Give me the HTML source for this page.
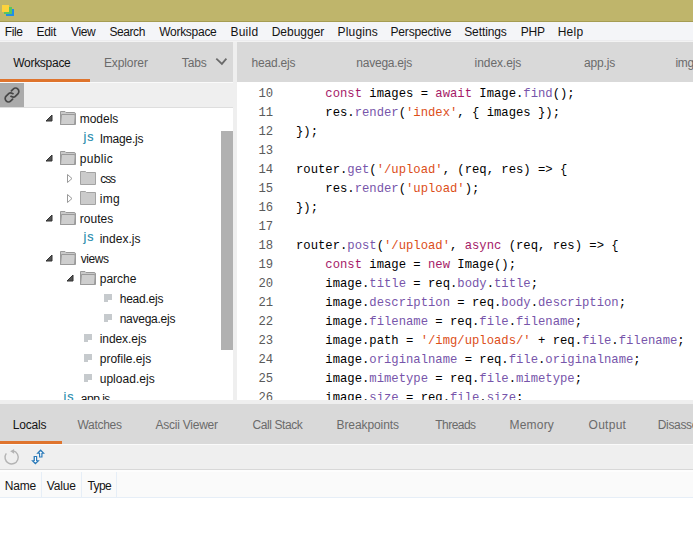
<!DOCTYPE html>
<html><head><meta charset="utf-8"><style>
html,body{margin:0;padding:0}
body{width:693px;height:538px;position:relative;overflow:hidden;background:#fff;font-family:"Liberation Sans",sans-serif}
.r{position:absolute}
.t{position:absolute;font-family:"Liberation Sans",sans-serif;font-size:12px;line-height:20px;white-space:pre}
.c{position:absolute;font-family:"Liberation Mono",monospace;font-size:12.22px;line-height:20px;white-space:pre;color:#000}
</style></head><body>
<div class="r" style="left:0;top:0;width:693px;height:21px;background:#bfb56b"></div>
<div class="r" style="left:0;top:21px;width:693px;height:1px;background:#a59c52"></div>
<svg class="r" style="left:0;top:0" width="20" height="20">
<rect x="6" y="9" width="8" height="7" fill="#1e8ee6"/>
<rect x="4" y="7" width="8" height="7" fill="#5cc65c"/>
<rect x="2" y="5" width="7" height="7" fill="#fdd33c"/>
</svg>
<div class="r" style="left:0;top:22px;width:693px;height:20px;background:#f4f5f8"></div>
<div class="r" style="left:0;top:40px;width:693px;height:1px;background:#ececee"></div>
<div class="r" style="left:0;top:41px;width:693px;height:1px;background:#f3f3f3"></div>
<!-- left tab bar -->
<div class="r" style="left:0;top:42px;width:233px;height:40px;background:#d9d9d9"></div>
<div class="r" style="left:0;top:79px;width:90px;height:3px;background:#df742d"></div>
<div class="r" style="left:0;top:82px;width:233px;height:1px;background:#fafafa"></div>
<div class="r" style="left:0;top:83px;width:233px;height:24px;background:#efefef"></div>
<div class="r" style="left:0;top:83px;width:24px;height:24px;background:#ababab"></div>
<svg class="r" style="left:0;top:83px" width="24" height="24">
<g transform="translate(12 12) rotate(-45)" fill="none" stroke="#474747" stroke-width="1.7" stroke-linecap="round">
<path d="M2.4 -3.3 H5 A3.3 3.3 0 0 1 5 3.3 H1 Q-0.8 3.3 -1.7 0.2"/>
<path d="M-2.4 3.3 H-5 A3.3 3.3 0 0 1 -5 -3.3 H-1 Q0.8 -3.3 1.7 -0.2"/>
</g>
</svg>
<div class="r" style="left:0;top:107px;width:233px;height:1px;background:#dedede"></div>
<div class="r" style="left:0;top:108px;width:233px;height:292px;background:#fff;overflow:hidden" id="tree">
</div>
<div class="r" style="left:221px;top:131px;width:12px;height:219px;background:#b1b1b1"></div>
<!-- sash -->
<div class="r" style="left:233px;top:42px;width:4px;height:362px;background:#efefef"></div>
<!-- editor tabs -->
<div class="r" style="left:237px;top:42px;width:456px;height:40px;background:#d9d9d9"></div>
<div class="r" style="left:237px;top:82px;width:456px;height:318px;background:#fff;overflow:hidden">
<div class="c" style="top:2px;left:21.5px;color:#5a5a5a">10</div><div class="c" style="top:2px;left:59px">    <span style="color:#a51a68">const</span> images = <span style="color:#a51a68">await</span> Image.<span style="color:#7755aa">find</span>();</div>
<div class="c" style="top:21px;left:21.5px;color:#5a5a5a">11</div><div class="c" style="top:21px;left:59px">    res.<span style="color:#7755aa">render</span>(<span style="color:#dc4e18">'index'</span>, { images });</div>
<div class="c" style="top:40px;left:21.5px;color:#5a5a5a">12</div><div class="c" style="top:40px;left:59px">});</div>
<div class="c" style="top:59px;left:21.5px;color:#5a5a5a">13</div><div class="c" style="top:59px;left:59px"></div>
<div class="c" style="top:78px;left:21.5px;color:#5a5a5a">14</div><div class="c" style="top:78px;left:59px">router.<span style="color:#7755aa">get</span>(<span style="color:#dc4e18">'/upload'</span>, (req, res) =&gt; {</div>
<div class="c" style="top:97px;left:21.5px;color:#5a5a5a">15</div><div class="c" style="top:97px;left:59px">    res.<span style="color:#7755aa">render</span>(<span style="color:#dc4e18">'upload'</span>);</div>
<div class="c" style="top:116px;left:21.5px;color:#5a5a5a">16</div><div class="c" style="top:116px;left:59px">});</div>
<div class="c" style="top:135px;left:21.5px;color:#5a5a5a">17</div><div class="c" style="top:135px;left:59px"></div>
<div class="c" style="top:154px;left:21.5px;color:#5a5a5a">18</div><div class="c" style="top:154px;left:59px">router.<span style="color:#7755aa">post</span>(<span style="color:#dc4e18">'/upload'</span>, <span style="color:#a51a68">async</span> (req, res) =&gt; {</div>
<div class="c" style="top:173px;left:21.5px;color:#5a5a5a">19</div><div class="c" style="top:173px;left:59px">    <span style="color:#a51a68">const</span> image = <span style="color:#a51a68">new</span> Image();</div>
<div class="c" style="top:192px;left:21.5px;color:#5a5a5a">20</div><div class="c" style="top:192px;left:59px">    image.<span style="color:#7755aa">title</span> = req.<span style="color:#7755aa">body</span>.<span style="color:#7755aa">title</span>;</div>
<div class="c" style="top:211px;left:21.5px;color:#5a5a5a">21</div><div class="c" style="top:211px;left:59px">    image.<span style="color:#7755aa">description</span> = req.<span style="color:#7755aa">body</span>.<span style="color:#7755aa">description</span>;</div>
<div class="c" style="top:230px;left:21.5px;color:#5a5a5a">22</div><div class="c" style="top:230px;left:59px">    image.<span style="color:#7755aa">filename</span> = req.<span style="color:#7755aa">file</span>.<span style="color:#7755aa">filename</span>;</div>
<div class="c" style="top:249px;left:21.5px;color:#5a5a5a">23</div><div class="c" style="top:249px;left:59px">    image.path = <span style="color:#dc4e18">'/img/uploads/'</span> + req.<span style="color:#7755aa">file</span>.<span style="color:#7755aa">filename</span>;</div>
<div class="c" style="top:268px;left:21.5px;color:#5a5a5a">24</div><div class="c" style="top:268px;left:59px">    image.<span style="color:#7755aa">originalname</span> = req.<span style="color:#7755aa">file</span>.<span style="color:#7755aa">originalname</span>;</div>
<div class="c" style="top:287px;left:21.5px;color:#5a5a5a">25</div><div class="c" style="top:287px;left:59px">    image.<span style="color:#7755aa">mimetype</span> = req.<span style="color:#7755aa">file</span>.<span style="color:#7755aa">mimetype</span>;</div>
<div class="c" style="top:306px;left:21.5px;color:#5a5a5a">26</div><div class="c" style="top:306px;left:59px">    image.<span style="color:#7755aa">size</span> = req.<span style="color:#7755aa">file</span>.<span style="color:#7755aa">size</span>;</div>

</div>
<div class="r" style="left:0;top:400px;width:693px;height:4px;background:#efefef"></div>
<!-- bottom -->
<div class="r" style="left:0;top:404px;width:693px;height:40px;background:#d9d9d9"></div>
<div class="r" style="left:0;top:441px;width:62px;height:3px;background:#df742d"></div>
<div class="r" style="left:0;top:444px;width:693px;height:1px;background:#fafafa"></div>
<div class="r" style="left:0;top:445px;width:693px;height:24px;background:#efefef"></div>
<div class="r" style="left:0;top:469px;width:693px;height:1px;background:#d8d8d8"></div>
<div class="r" style="left:0;top:470px;width:693px;height:2px;background:#fdfdfd"></div>
<div class="r" style="left:0;top:472px;width:693px;height:25px;background:#fafafa"></div>
<div class="r" style="left:0;top:497px;width:693px;height:1px;background:#e6eef7"></div>
<div class="r" style="left:41px;top:472px;width:1px;height:25px;background:#e6eef7"></div>
<div class="r" style="left:81px;top:472px;width:1px;height:25px;background:#e6eef7"></div>
<div class="r" style="left:116px;top:472px;width:1px;height:25px;background:#e6eef7"></div>
<svg class="r" style="left:0;top:445px" width="50" height="24">
<path d="M13.2 5.9 A6.6 6.6 0 1 1 6.3 8.4" fill="none" stroke="#b3b3b3" stroke-width="1.4"/>
<path d="M10.2 6.3 L14.1 4.0 L14.1 8.7 Z" fill="#b3b3b3"/>
<path d="M40.6 4.3 L45 8.8 L42.5 8.8 L42.5 12.6 L39 12.6 L39 8.8 L36.3 8.8 Z" fill="#2a7ab9"/>
<path d="M40.7 6.3 L42.3 8 L41.3 8 L41.3 11.6 L40.2 11.6 L40.2 8 L39.1 8 Z" fill="#fff"/>
<path d="M35.4 19.5 L39.8 15.3 L37.2 15.3 L37.2 11 L33.6 11 L33.6 15.3 L31.1 15.3 Z" fill="#2a7ab9"/>
<path d="M35.4 17.6 L37.1 16.1 L36 16.1 L36 12 L34.9 12 L34.9 16.1 L33.8 16.1 Z" fill="#fff"/>
</svg>
<svg class="r" style="left:210px;top:52px" width="22" height="20">
<path d="M6.3 6.7 L11.9 11.9 L16.4 6.7" fill="none" stroke="#6a6a6a" stroke-width="1.8"/>
</svg>
<span class="t" style="left:4.80px;top:22.00px;color:#141414;font-size:12px;letter-spacing:-0.400px">File</span>
<span class="t" style="left:36.40px;top:22.00px;color:#141414;font-size:12px;letter-spacing:-0.267px">Edit</span>
<span class="t" style="left:71.10px;top:22.00px;color:#141414;font-size:12px;letter-spacing:-0.433px">View</span>
<span class="t" style="left:109.40px;top:22.00px;color:#141414;font-size:12px;letter-spacing:-0.420px">Search</span>
<span class="t" style="left:159.20px;top:22.00px;color:#141414;font-size:12px;letter-spacing:-0.275px">Workspace</span>
<span class="t" style="left:230.40px;top:22.00px;color:#141414;font-size:12px;letter-spacing:0.250px">Build</span>
<span class="t" style="left:271.70px;top:22.00px;color:#141414;font-size:12px;letter-spacing:-0.014px">Debugger</span>
<span class="t" style="left:337.60px;top:22.00px;color:#141414;font-size:12px;letter-spacing:0.150px">Plugins</span>
<span class="t" style="left:390.50px;top:22.00px;color:#141414;font-size:12px;letter-spacing:-0.170px">Perspective</span>
<span class="t" style="left:464.20px;top:22.00px;color:#141414;font-size:12px;letter-spacing:-0.100px">Settings</span>
<span class="t" style="left:520.70px;top:22.00px;color:#141414;font-size:12px;letter-spacing:-0.200px">PHP</span>
<span class="t" style="left:557.70px;top:22.00px;color:#141414;font-size:12px;letter-spacing:0.233px">Help</span>
<span class="t" style="left:13.20px;top:53.00px;color:#141414;font-size:12px;letter-spacing:-0.275px">Workspace</span>
<span class="t" style="left:103.90px;top:53.00px;color:#6b6b6b;font-size:12px;letter-spacing:-0.100px">Explorer</span>
<span class="t" style="left:181.80px;top:53.00px;color:#6b6b6b;font-size:12px;letter-spacing:-0.133px">Tabs</span>
<span class="t" style="left:251.50px;top:53.00px;color:#6b6b6b;font-size:12px;letter-spacing:-0.200px">head.ejs</span>
<span class="t" style="left:356.30px;top:53.00px;color:#6b6b6b;font-size:12px;letter-spacing:-0.233px">navega.ejs</span>
<span class="t" style="left:474.60px;top:53.00px;color:#6b6b6b;font-size:12px;letter-spacing:-0.075px">index.ejs</span>
<span class="t" style="left:584.00px;top:53.00px;color:#6b6b6b;font-size:12px;letter-spacing:-0.140px">app.js</span>
<span class="t" style="left:675.50px;top:53.00px;color:#6b6b6b;font-size:12px;letter-spacing:-0.350px">img.js</span>
<span class="t" style="left:12.70px;top:415.00px;color:#141414;font-size:12px;letter-spacing:-0.200px">Locals</span>
<span class="t" style="left:77.40px;top:415.00px;color:#6b6b6b;font-size:12px;letter-spacing:-0.267px">Watches</span>
<span class="t" style="left:155.50px;top:415.00px;color:#6b6b6b;font-size:12px;letter-spacing:-0.236px">Ascii Viewer</span>
<span class="t" style="left:252.60px;top:415.00px;color:#6b6b6b;font-size:12px;letter-spacing:-0.422px">Call Stack</span>
<span class="t" style="left:336.50px;top:415.00px;color:#6b6b6b;font-size:12px;letter-spacing:-0.090px">Breakpoints</span>
<span class="t" style="left:435.30px;top:415.00px;color:#6b6b6b;font-size:12px;letter-spacing:-0.550px">Threads</span>
<span class="t" style="left:509.60px;top:415.00px;color:#6b6b6b;font-size:12px;letter-spacing:0.180px">Memory</span>
<span class="t" style="left:588.60px;top:415.00px;color:#6b6b6b;font-size:12px;letter-spacing:0.260px">Output</span>
<span class="t" style="left:657.80px;top:415.00px;color:#6b6b6b;font-size:12px;letter-spacing:-0.350px">Disassembly</span>
<span class="t" style="left:4.80px;top:476.00px;color:#141414;font-size:12px;letter-spacing:-0.233px">Name</span>
<span class="t" style="left:46.80px;top:476.00px;color:#141414;font-size:12px;letter-spacing:-0.150px">Value</span>
<span class="t" style="left:87.40px;top:476.00px;color:#141414;font-size:12px;letter-spacing:-0.567px">Type</span>
<div class="r" style="left:0;top:108px;width:221px;height:292px;overflow:hidden"><svg class="r" style="left:0;top:0" width="221" height="300"><path d="M52 7 L52 13 L46 13 Z" fill="#555" stroke="#333" stroke-width="1" stroke-linejoin="round"/><path d="M60.5 16.5 V3.5 H65 L66 4.5 H74 Q75.5 4.5 75.5 6 V16.5 Z" fill="#c9c9c9" stroke="#9a9a9a"/><path d="M60.5 16.5 L61.5 6.5 H74 Q75.5 6.5 75.2 8 L74.5 16.5 Z" fill="#cecece" stroke="#9a9a9a"/><text x="83.6" y="33" letter-spacing="0.8" font-family="Liberation Sans" font-size="12.5" fill="#1c88aa" stroke="#1c88aa" stroke-width="0.12">js</text><path d="M52 47 L52 53 L46 53 Z" fill="#555" stroke="#333" stroke-width="1" stroke-linejoin="round"/><path d="M60.5 56.5 V43.5 H65 L66 44.5 H74 Q75.5 44.5 75.5 46 V56.5 Z" fill="#c9c9c9" stroke="#9a9a9a"/><path d="M60.5 56.5 L61.5 46.5 H74 Q75.5 46.5 75.2 48 L74.5 56.5 Z" fill="#cecece" stroke="#9a9a9a"/><path d="M67.5 66.5 L72 70.5 L67.5 74.5 Z" fill="#fff" stroke="#999" stroke-width="1"/><path d="M80.5 76.5 V63.5 H85.5 L86.5 64.5 H95.5 V76.5 Z" fill="#cbcbcb" stroke="#a3a3a3"/><path d="M67.5 86.5 L72 90.5 L67.5 94.5 Z" fill="#fff" stroke="#999" stroke-width="1"/><path d="M80.5 96.5 V83.5 H85.5 L86.5 84.5 H95.5 V96.5 Z" fill="#cbcbcb" stroke="#a3a3a3"/><path d="M52 107 L52 113 L46 113 Z" fill="#555" stroke="#333" stroke-width="1" stroke-linejoin="round"/><path d="M60.5 116.5 V103.5 H65 L66 104.5 H74 Q75.5 104.5 75.5 106 V116.5 Z" fill="#c9c9c9" stroke="#9a9a9a"/><path d="M60.5 116.5 L61.5 106.5 H74 Q75.5 106.5 75.2 108 L74.5 116.5 Z" fill="#cecece" stroke="#9a9a9a"/><text x="83.6" y="133" letter-spacing="0.8" font-family="Liberation Sans" font-size="12.5" fill="#1c88aa" stroke="#1c88aa" stroke-width="0.12">js</text><path d="M52 147 L52 153 L46 153 Z" fill="#555" stroke="#333" stroke-width="1" stroke-linejoin="round"/><path d="M60.5 156.5 V143.5 H65 L66 144.5 H74 Q75.5 144.5 75.5 146 V156.5 Z" fill="#c9c9c9" stroke="#9a9a9a"/><path d="M60.5 156.5 L61.5 146.5 H74 Q75.5 146.5 75.2 148 L74.5 156.5 Z" fill="#cecece" stroke="#9a9a9a"/><path d="M73 167 L73 173 L67 173 Z" fill="#555" stroke="#333" stroke-width="1" stroke-linejoin="round"/><path d="M80.5 176.5 V163.5 H85 L86 164.5 H94 Q95.5 164.5 95.5 166 V176.5 Z" fill="#c9c9c9" stroke="#9a9a9a"/><path d="M80.5 176.5 L81.5 166.5 H94 Q95.5 166.5 95.2 168 L94.5 176.5 Z" fill="#cecece" stroke="#9a9a9a"/><path d="M104 186 H112 V192 H108 V194 H104 Z" fill="#c6cacd"/><path d="M104 206 H112 V212 H108 V214 H104 Z" fill="#c6cacd"/><path d="M84 226 H92 V232 H88 V234 H84 Z" fill="#c6cacd"/><path d="M84 246 H92 V252 H88 V254 H84 Z" fill="#c6cacd"/><path d="M84 266 H92 V272 H88 V274 H84 Z" fill="#c6cacd"/><text x="63.6" y="293" letter-spacing="0.8" font-family="Liberation Sans" font-size="12.5" fill="#1c88aa" stroke="#1c88aa" stroke-width="0.12">js</text></svg><span class="t" style="left:79.70px;top:1.00px;color:#141414;font-size:12px;letter-spacing:-0.020px">models</span><span class="t" style="left:99.70px;top:21.00px;color:#141414;font-size:12px;letter-spacing:-0.229px">Image.js</span><span class="t" style="left:79.70px;top:41.00px;color:#141414;font-size:12px;letter-spacing:0.340px">public</span><span class="t" style="left:100.20px;top:61.00px;color:#141414;font-size:12px;letter-spacing:-1.050px">css</span><span class="t" style="left:99.70px;top:81.00px;color:#141414;font-size:12px;letter-spacing:0.350px">img</span><span class="t" style="left:79.70px;top:101.00px;color:#141414;font-size:12px;letter-spacing:0.040px">routes</span><span class="t" style="left:99.70px;top:121.00px;color:#141414;font-size:12px;letter-spacing:-0.000px">index.js</span><span class="t" style="left:80.70px;top:141.00px;color:#141414;font-size:12px;letter-spacing:-0.425px">views</span><span class="t" style="left:99.70px;top:161.00px;color:#141414;font-size:12px;letter-spacing:0.020px">parche</span><span class="t" style="left:119.70px;top:181.00px;color:#141414;font-size:12px;letter-spacing:-0.229px">head.ejs</span><span class="t" style="left:119.70px;top:201.00px;color:#141414;font-size:12px;letter-spacing:-0.256px">navega.ejs</span><span class="t" style="left:99.70px;top:221.00px;color:#141414;font-size:12px;letter-spacing:-0.063px">index.ejs</span><span class="t" style="left:99.70px;top:241.00px;color:#141414;font-size:12px;letter-spacing:0.020px">profile.ejs</span><span class="t" style="left:99.70px;top:261.00px;color:#141414;font-size:12px;letter-spacing:0.033px">upload.ejs</span><span class="t" style="left:80.80px;top:281.00px;color:#141414;font-size:12px;letter-spacing:-0.500px">app.js</span></div>
</body></html>
